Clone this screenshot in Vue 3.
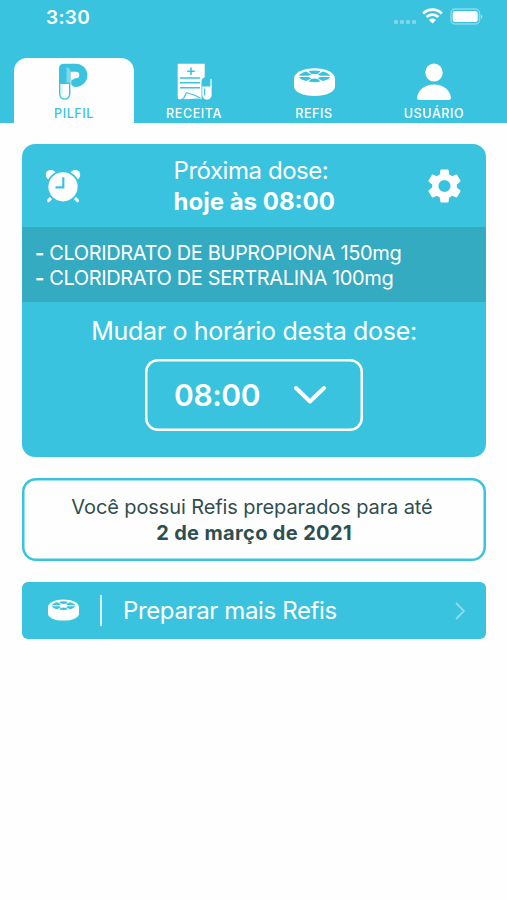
<template>
  <div class="app">
    <header class="header">
      <div class="status">
        <span class="clock">3:30</span>
        <div class="signals">
          <svg class="dots" viewBox="0 0 24 4">
            <rect v-for="n in 4" :key="n" :x="(n - 1) * 6 + 1" y="0" width="4" height="4" rx="1.2" />
          </svg>
          <svg class="wifi" viewBox="0 0 21 16">
            <path d="M1.2 5.4a13.4 13.4 0 0 1 18.6 0M4.6 9a8.5 8.5 0 0 1 11.8 0" />
            <path class="wifi-tip" d="M7 11.9a5 5 0 0 1 7 0L10.5 15.6z" />
          </svg>
          <svg class="battery" viewBox="0 0 34 17">
            <rect class="battery-case" x="1" y="1" width="28.5" height="15" rx="4" />
            <rect x="2.7" y="3" width="25" height="11" rx="2.2" />
            <path class="battery-cap" d="M30.8 6v5q1.600-1 1.600-2.500T30.800 6z" />
          </svg>
        </div>
      </div>

      <nav class="tabs">
        <button
          v-for="tab in tabs"
          :key="tab.id"
          class="tab"
          :class="[tab.id, { active: current === tab.id }]"
          @click="current = tab.id"
        >
          <svg v-if="tab.id === 'pilfil'" class="tab-icon" viewBox="0 0 40 40">
            <path class="logo-main" d="M5 21.500V6.500Q5 1.700 10 1.700h11.700a11.650 11.650 0 0 1 0 23.300q-3 0-4.500-2.500V18.500l4-2.200h.8a3.300 3.300 0 0 0 0-6.600h-5.500v11.800z" />
            <path class="logo-light" d="M12.500 5.500q3.500 0 3.500 3v12.800h-3.500z" />
            <path class="logo-capsule" d="M5.700 21.300v10.800a5 5 0 0 0 10 0V21.300z" />
            <path class="logo-shine" d="M8 23v9.500" />
          </svg>

          <svg v-else-if="tab.id === 'receita'" class="tab-icon" viewBox="0 0 40 40">
            <path class="solid" d="M3.700 1.700h27v13.800q-3.200.5-3.200 4.500V37.300l-3.500-.8L11 37.300 8.500 36.200 6 37.500q-2.300-.2-2.300-2z" />
            <path class="cut" d="M17 5.500v7.600M13.200 9.300h7.600M6 16h20M6 20.800h20M6 25.700h20" />
            <path class="cut thin" d="M9.500 36.500l2.300-4.800q.5-1 1.700-.7l8 2.500 5 2.700" />
            <path class="pill-top" d="M28.300 25v-5.500a4.500 4.500 0 0 1 9 0V25z" />
            <path class="solid" d="M28.300 24.500h9.300v8.500a4.600 4.600 0 0 1-9.300 0z" />
            <path class="pill-edge" d="M37 17v9" />
            <path class="cut thin" d="M30.700 26.500v7" />
          </svg>

          <svg v-else-if="tab.id === 'refis'" class="tab-icon" viewBox="0 0 41 28">
            <path class="solid" d="M0 10.500C0 4.500 9 .2 20.500.2S41 4.500 41 10.500v8C41 24 32 28 20.500 28S0 24 0 18.500z" />
            <path class="hole" :d="wheel" />
          </svg>

          <svg v-else class="tab-icon" viewBox="0 0 40 40">
            <ellipse class="solid" cx="20" cy="10.600" rx="8.700" ry="9" />
            <path class="solid" d="M5.300 38q-2.300 0-2.300-2.300C4 28 10.500 22.400 20 22.400S36 28 37 35.700q0 2.300-2.300 2.300z" />
          </svg>
          <span class="tab-label">{{ tab.label }}</span>
        </button>
      </nav>
    </header>

    <main class="content">
      <section class="card">
        <div class="card-top">
          <svg class="alarm" viewBox="0 0 36 34">
            <circle cx="5.800" cy="5.900" r="5" />
            <circle cx="30.200" cy="5.900" r="5" />
            <path class="alarm-legs" d="M7 28l-3.500 3.600M29 28l3.500 3.600" />
            <circle class="alarm-face" cx="18" cy="17.800" r="15.500" />
            <path class="alarm-hands" d="M18.300 8.300v10H10.500" />
          </svg>
          <p class="next">
            <span class="next-label">Próxima dose:</span>
            <strong>hoje às 08:00</strong>
          </p>
          <svg class="gear" viewBox="2 2 20 20">
            <path d="M19.430 12.980c.04-.32.07-.64.07-.98s-.03-.66-.07-.98l2.110-1.650c.19-.15.24-.42.12-.64l-2-3.460c-.12-.22-.39-.3-.61-.22l-2.490 1c-.52-.4-1.080-.73-1.690-.98l-.38-2.650C14.460 2.180 14.250 2 14 2h-4c-.25 0-.46.18-.49.42l-.38 2.650c-.61.25-1.170.59-1.690.98l-2.490-1c-.23-.09-.49 0-.61.22l-2 3.460c-.13.22-.07.49.12.64l2.110 1.650c-.04.32-.07.65-.07.98s.03.66.07.98l-2.110 1.650c-.19.15-.24.42-.12.64l2 3.460c.12.22.39.3.61.22l2.490-1c.52.4 1.080.73 1.690.98l.38 2.650c.03.24.24.42.49.42h4c.25 0 .46-.18.49-.42l.38-2.650c.61-.25 1.170-.59 1.690-.98l2.490 1c.23.09.49 0 .61-.22l2-3.460c.12-.22.07-.49-.12-.64zM12 15.700A3.700 3.700 0 1 1 12 8.300a3.700 3.700 0 0 1 0 7.400z" />
          </svg>
        </div>

        <ul class="meds">
          <li v-for="med in meds" :key="med"><b>-</b> {{ med }}</li>
        </ul>

        <div class="change">
          <p class="change-label">Mudar o horário desta dose:</p>
          <button class="select">
            <span>{{ time }}</span>
            <svg class="chevron" viewBox="0 0 34 20">
              <path d="M3 3l14 13.500L31 3" />
            </svg>
          </button>
        </div>
      </section>

      <section class="notice">
        <p class="notice-text">Você possui Refis preparados para até</p>
        <strong>2 de março de 2021</strong>
      </section>

      <button class="prepare">
        <svg class="refill" viewBox="0 0 41 28">
          <path class="solid" d="M0 10.500C0 4.500 9 .2 20.500.2S41 4.500 41 10.500v8C41 24 32 28 20.500 28S0 24 0 18.500z" />
          <path class="hole" :d="wheel" />
        </svg>
        <span class="divider"></span>
        <span class="prepare-label">Preparar mais Refis</span>
        <svg class="arrow" viewBox="0 0 10 18">
          <path d="M1 1l8 8-8 8" />
        </svg>
      </button>
    </main>
  </div>
</template>

<script setup>
import { ref } from 'vue';

const current = ref('pilfil');
const time = ref('08:00');

const tabs = [
  { id: 'pilfil', label: 'PILFIL' },
  { id: 'receita', label: 'RECEITA' },
  { id: 'refis', label: 'REFIS' },
  { id: 'usuario', label: 'USUÁRIO' },
];

const meds = [
  'CLORIDRATO DE BUPROPIONA 150mg',
  'CLORIDRATO DE SERTRALINA 100mg',
];

// six compartments of the refill wheel
const wheel = [
  'M14.5 3.1q6-1.300 12 0l-2.300 2.300q-3.700 1.300-7.400 0z',
  'M14.500 13.500q6 1.300 12 0l-2.300-2.300q-3.700-1.300-7.400 0z',
  'M12.200 3.600q-5.800 1.300-7.200 4.100h9.500q2.600-.6 2.500-1.500z',
  'M12.200 13q-5.800-1.300-7.200-4.100h9.500q2.600.6 2.500 1.500z',
  'M28.800 3.600q5.800 1.300 7.200 4.100h-9.500q-2.600-.6-2.500-1.500z',
  'M28.800 13q5.800-1.300 7.200-4.100h-9.500q-2.600.6-2.500 1.500z',
].join('');
</script>

<style>
body {
  background: #fefefe;
}
</style>

<style scoped>
.app {
  --main: #3ac3de;
  min-height: 900px;
  background: #fefefe;
  color: #fff;
  font-family: Inter, 'Liberation Sans', sans-serif;
}
p,
ul {
  margin: 0;
  padding: 0;
}
button {
  font: inherit;
  color: inherit;
  border: 0;
  padding: 0;
  background: none;
  cursor: pointer;
}
svg {
  display: block;
  flex: none;
  fill: #fff;
}
.header {
  height: 123px;
  background: var(--main);
}
.status {
  height: 58px;
  box-sizing: border-box;
  padding: 7px 23px 0 46px;
  display: flex;
  justify-content: space-between;
  align-items: flex-start;
}
.clock {
  margin-top: 1px;
  font-size: 19px;
  line-height: 20px;
  font-weight: 600;
  letter-spacing: 0.3px;
}
.signals {
  display: flex;
}
.dots {
  width: 24px;
  height: 4px;
  margin: 13px 5px 0 0;
  opacity: 0.35;
}
.wifi {
  width: 21px;
  height: 16px;
  margin: 1px 7px 0 0;
  fill: none;
  stroke: #fff;
  stroke-width: 2.8;
}
.wifi-tip {
  fill: #fff;
  stroke: none;
}
.battery {
  width: 34px;
  height: 17px;
  margin-top: 1px;
}
.battery-case {
  fill: none;
  stroke: #fff;
  stroke-opacity: 0.4;
  stroke-width: 1.4;
}
.battery-cap {
  opacity: 0.5;
}
.tabs {
  display: flex;
  padding: 0 13px 0 14px;
}
.tab {
  flex: 1;
  height: 65px;
  display: flex;
  flex-direction: column;
  align-items: center;
  border-radius: 13px 13px 0 0;
}
.tab.active {
  background: #fefefe;
  color: var(--main);
}
.tab-icon {
  width: 40px;
  height: 40px;
  margin-top: 4px;
}
.refis .tab-icon {
  width: 41px;
  height: 28px;
  margin: 10px 0 6px;
}
.tab-label {
  margin-top: 5px;
  font-size: 12.5px;
  line-height: 14px;
  font-weight: 500;
  letter-spacing: 0.6px;
}
.logo-main {
  fill: #3ac3de;
}
.logo-light {
  fill: #7fd8e9;
}
.logo-capsule {
  fill: #fefefe;
  stroke: #3ac3de;
  stroke-width: 1.4;
}
.logo-shine {
  fill: none;
  stroke: #b5e8f2;
  stroke-width: 1;
}
.solid {
  fill: #fff;
}
.pill-top {
  fill: #3ac3de;
}
.pill-edge {
  stroke: #fff;
  stroke-width: 1.2;
}
.cut {
  fill: none;
  stroke: #3ac3de;
  stroke-width: 1.6;
}
.cut.thin {
  stroke-width: 1.2;
}
.hole {
  fill: #3ac3de;
}
.content {
  display: flex;
  flex-direction: column;
  padding: 21px 21px 0 22px;
}
.card {
  height: 313px;
  border-radius: 13px;
  background: var(--main);
  overflow: hidden;
}
.card-top {
  height: 83px;
  box-sizing: border-box;
  padding: 0 25px 0 23px;
  display: flex;
  align-items: center;
  justify-content: space-between;
}
.alarm {
  width: 36px;
  height: 34px;
}
.alarm-legs {
  stroke: #fff;
  stroke-width: 3;
  stroke-linecap: round;
}
.alarm-face {
  stroke: #3ac3de;
  stroke-width: 1.8;
}
.alarm-hands {
  fill: none;
  stroke: #3ac3de;
  stroke-width: 2.2;
}
.gear {
  width: 33px;
  height: 34px;
}
.next {
  display: flex;
  flex-direction: column;
  width: 162px;
  font-size: 24px;
  line-height: 31px;
  white-space: nowrap;
}
.next-label {
  letter-spacing: -0.45px;
}
.meds {
  height: 75px;
  box-sizing: border-box;
  padding: 14px 13px 0;
  background: #34abc1;
  list-style: none;
  font-size: 20px;
  line-height: 25px;
  letter-spacing: -0.37px;
  white-space: nowrap;
}
.change {
  display: flex;
  flex-direction: column;
  align-items: center;
  padding-top: 14px;
}
.change-label {
  font-size: 25px;
  line-height: 30px;
  letter-spacing: -0.31px;
}
.select {
  width: 218px;
  height: 72px;
  box-sizing: border-box;
  margin-top: 13px;
  padding: 0 36px 0 29px;
  box-shadow: inset 0 0 0 2.5px #fff;
  border-radius: 13px;
  display: flex;
  align-items: center;
  justify-content: space-between;
  font-size: 30px;
  font-weight: 600;
  letter-spacing: -0.4px;
}
.chevron {
  width: 34px;
  height: 20px;
  fill: none;
  stroke: #fff;
  stroke-width: 4;
  stroke-linecap: round;
  stroke-linejoin: round;
}
.notice {
  height: 83px;
  box-sizing: border-box;
  margin-top: 21px;
  padding-top: 16px;
  box-shadow: inset 0 0 0 2.5px var(--main);
  border-radius: 14px;
  color: #2f4f4f;
  text-align: center;
  font-size: 20px;
  line-height: 26px;
  white-space: nowrap;
}
.notice-text {
  margin-right: 4px;
  letter-spacing: -0.1px;
}
.notice strong {
  letter-spacing: 0.35px;
}
.prepare {
  height: 57px;
  margin-top: 21px;
  padding: 0 21px 0 26px;
  border-radius: 6px;
  background: var(--main);
  display: flex;
  align-items: center;
}
.refill {
  width: 31px;
  height: 22px;
  margin-top: -2px;
}
.divider {
  width: 2px;
  height: 31px;
  margin: 0 21px;
  background: #d8f3f8;
}
.prepare-label {
  font-size: 24px;
  letter-spacing: -0.37px;
}
.arrow {
  width: 10px;
  height: 18px;
  margin-left: auto;
  fill: none;
  stroke: #8cdcec;
  stroke-width: 1.8;
}
</style>
